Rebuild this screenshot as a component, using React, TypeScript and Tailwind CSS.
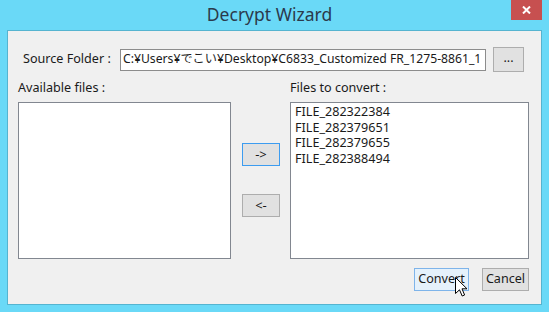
import React from "react";

const files = ["FILE_282322384", "FILE_282379651", "FILE_282379655", "FILE_282388494"];

export default function App() {
  return (
    <div
      className="w-[549px] h-[312px] bg-[#6ad9f7] flex flex-col relative select-none"
      style={{ fontFamily: '"Noto Sans", "Noto Sans CJK JP", sans-serif' }}
    >
      {/* title bar */}
      <div className="h-[30px] relative flex items-center justify-center">
        <span className="text-[17.5px] text-[#2b3a4c] leading-none mr-[10px]">Decrypt Wizard</span>
        <button className="absolute right-[7px] top-0 w-[31px] h-[20px] bg-[#c75050] flex items-center justify-center">
          <svg width="9" height="8" viewBox="0 0 9 8">
            <path d="M1 0.5 L8 7.5 M8 0.5 L1 7.5" stroke="#fff" strokeWidth="2" />
          </svg>
        </button>
      </div>

      {/* client area */}
      <div className="mx-[7px] mb-[7px] flex-1 border border-[#55b4d0] bg-[#f0f0f0] flex flex-col pt-[16px] pl-[10px] pr-[12px] text-[12.6px] text-[#1a1a1a]">
        <div className="flex items-center h-[25px]">
          <span className="w-[102px] pl-[5px] whitespace-nowrap">Source Folder :</span>
          <div className="w-[366px] h-[22px] bg-white border border-[#8c8c8c] flex items-center pl-[2px] overflow-hidden whitespace-nowrap text-[12.2px]">
            C:¥Users¥でこい¥Desktop¥C6833_Customized FR_1275-8861_1
          </div>
          <button className="ml-[7px] w-[31px] h-[25px] bg-[#e1e1e1] border border-[#adadad] flex items-center justify-center pb-[3px]">
            ...
          </button>
        </div>

        <div className="flex mt-[8px]">
          <div className="flex flex-col">
            <span className="h-[16px] leading-[16px] whitespace-nowrap">Available files :</span>
            <div className="mt-[6px] w-[213px] h-[157px] bg-white border border-[#828790]" />
          </div>

          <div className="flex flex-col ml-[11px] pt-[63px] w-[48px]">
            <button className="w-[38px] h-[23px] bg-[#e1e1e1] border border-[#3c9cf0] flex items-center justify-center leading-none text-[13px]">
              -&gt;
            </button>
            <button className="mt-[28px] w-[38px] h-[23px] bg-[#e1e1e1] border border-[#adadad] flex items-center justify-center leading-none text-[13px]">
              &lt;-
            </button>
          </div>

          <div className="flex flex-col">
            <span className="h-[16px] leading-[16px] whitespace-nowrap">Files to convert :</span>
            <div className="mt-[6px] w-[239px] h-[157px] bg-white border border-[#828790] pt-[1px] pl-[4px] flex flex-col">
              {files.map((f) => (
                <span key={f} className="leading-[15.5px]">
                  {f}
                </span>
              ))}
            </div>
          </div>
        </div>

        <div className="flex justify-end mt-[9px] gap-[13px]">
          <button className="w-[55px] h-[23px] bg-[#e5f1fb] border border-[#7eb4ea] flex items-center justify-center">
            Convert
          </button>
          <button className="w-[47px] h-[23px] bg-[#e1e1e1] border border-[#adadad] flex items-center justify-center">
            Cancel
          </button>
        </div>
      </div>

      {/* mouse cursor */}
      <svg className="absolute left-[455px] top-[277px]" width="13" height="21" viewBox="0 0 13 21">
        <path d="M0.5 0.5 L0.5 16.5 L4.5 12.8 L7.2 19 L9.6 18 L7 11.8 L12 11.8 Z" fill="#fff" stroke="#000" strokeWidth="1" />
      </svg>
    </div>
  );
}
